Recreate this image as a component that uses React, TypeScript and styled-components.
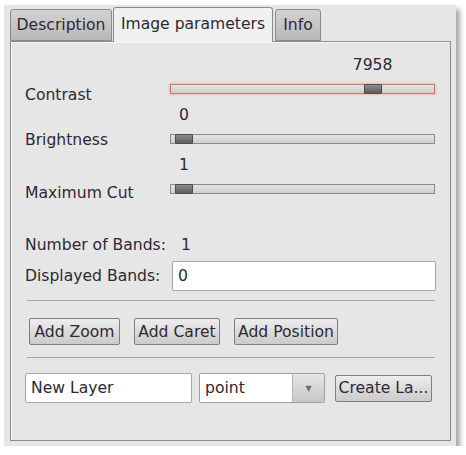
import styled, { createGlobalStyle } from "styled-components";

const GlobalStyle = createGlobalStyle`
  html, body {
    margin: 0;
    padding: 0;
    background: #ffffff;
  }
  body {
    font-family: "DejaVu Sans", Verdana, sans-serif;
    font-size: 15.6px;
    color: #2e2834;
  }
`;

const Frame = styled.div`
  margin: 5px 0 0 4px;
  width: 452px;
  height: 441px;
  box-sizing: border-box;
  background: #e6e6e6;
  box-shadow: 4px 4px 5px rgba(0, 0, 0, 0.35);
  padding: 2px 5px 5px 6px;
  display: flex;
  flex-direction: column;
`;

const TabBar = styled.div`
  display: flex;
  align-items: flex-end;
  height: 34px;
  position: relative;
  z-index: 1;
`;

const Tab = styled.div<{ $active?: boolean; $width: number }>`
  width: ${(p) => p.$width}px;
  height: ${(p) => (p.$active ? 35 : 32)}px;
  margin-bottom: ${(p) => (p.$active ? -1 : 0)}px;
  margin-right: ${(p) => (p.$active ? 2 : 1)}px;
  padding-bottom: ${(p) => (p.$active ? 3 : 0)}px;
  box-sizing: border-box;
  border: 1px solid #8a8a8a;
  border-bottom: ${(p) => (p.$active ? "none" : "1px solid #8a8a8a")};
  border-radius: 3px 3px 0 0;
  background: ${(p) =>
    p.$active ? "#f0f0f0" : "linear-gradient(#d3d3d3, #b8b8b8)"};
  display: flex;
  align-items: center;
  justify-content: center;
  white-space: nowrap;
`;

const Panel = styled.div`
  flex: 1;
  border: 1px solid #8c8c8c;
  background: #e6e6e6;
  box-shadow: inset 1px 1px 0 #f6f6f6;
  padding: 8px 14px 0 14px;
  display: flex;
  flex-direction: column;
`;

const SliderRow = styled.div`
  display: grid;
  grid-template-columns: 145px 1fr;
  height: 50px;
`;

const RowLabel = styled.div<{ $center: number }>`
  padding-top: ${(p) => p.$center - 9}px;
  line-height: 18px;
  white-space: nowrap;
`;

const SliderCell = styled.div`
  position: relative;
  padding-top: 34px;
`;

const ValueLabel = styled.div`
  position: absolute;
  top: 6px;
  line-height: 18px;
  transform: translateX(-50%);
`;

const Track = styled.div<{ $focused?: boolean }>`
  position: relative;
  width: 265px;
  height: 10px;
  box-sizing: border-box;
  border: 1px solid ${(p) => (p.$focused ? "#c57a66" : "#8a8a8a")};
  background: linear-gradient(#e4e4e4, #cfcfcf);
  box-shadow: ${(p) =>
    p.$focused ? "0 0 2px 1px rgba(245, 165, 135, 0.6)" : "none"};
`;

const Thumb = styled.div`
  position: absolute;
  top: -1px;
  width: 18px;
  height: 10px;
  box-sizing: border-box;
  border: 1px solid #4c4c4c;
  border-radius: 1px;
  background: linear-gradient(#8e8e8e, #5c5c5c);
`;

const InfoRow = styled.div<{ $top: number; $col: number }>`
  display: grid;
  grid-template-columns: ${(p) => p.$col}px 1fr;
  align-items: center;
  margin-top: ${(p) => p.$top}px;
  line-height: 20px;
  white-space: nowrap;
`;

const InfoValue = styled.div`
  padding-left: 11px;
`;

const TextField = styled.input<{ $width?: number }>`
  height: 30px;
  width: ${(p) => (p.$width ? `${p.$width}px` : "100%")};
  box-sizing: border-box;
  border: 1px solid #a6a6a6;
  border-radius: 2px;
  background: #ffffff;
  padding: 0 5px;
  font: inherit;
  color: #2e2834;
  outline: none;
`;

const Separator = styled.div<{ $top: number }>`
  margin: ${(p) => p.$top}px 1px 0 2px;
  height: 1px;
  background: #a4a4a4;
`;

const ButtonRow = styled.div<{ $top: number }>`
  display: flex;
  align-items: center;
  gap: 14px;
  margin-top: ${(p) => p.$top}px;
  padding-left: 4px;
`;

const Button = styled.button<{ $width: number }>`
  width: ${(p) => p.$width}px;
  height: 27px;
  padding: 0;
  box-sizing: border-box;
  border: 1px solid #7e7e7e;
  border-radius: 2px;
  background: linear-gradient(#ededed, #cbcbcb);
  font: inherit;
  color: #2e2834;
  white-space: nowrap;
  overflow: hidden;
`;

const BottomRow = styled.div<{ $top: number }>`
  display: flex;
  align-items: center;
  margin-top: ${(p) => p.$top}px;
  gap: 7px;
`;

const Combo = styled.div`
  display: flex;
  width: 126px;
  height: 30px;
  box-sizing: border-box;
  border: 1px solid #a0a0a0;
  border-radius: 2px;
  margin-right: 3px;
`;

const ComboText = styled.div`
  flex: 1;
  background: #ffffff;
  padding-left: 5px;
  line-height: 28px;
`;

const ComboArrow = styled.div`
  width: 31px;
  border-left: 1px solid #b4b4b4;
  background: linear-gradient(#e6e6e6, #c6c6c6);
  display: flex;
  align-items: center;
  justify-content: center;
  color: #707070;
  font-size: 8px;
`;

type SliderProps = {
  label: string;
  value: number;
  max: number;
  labelCenter: number;
  focused?: boolean;
};

function Slider({ label, value, max, labelCenter, focused }: SliderProps) {
  const offset = (value / max) * 237;
  return (
    <SliderRow>
      <RowLabel $center={labelCenter}>{label}</RowLabel>
      <SliderCell>
        <ValueLabel style={{ left: 14 + offset }}>{value}</ValueLabel>
        <Track $focused={focused}>
          <Thumb style={{ left: 4 + offset }} />
        </Track>
      </SliderCell>
    </SliderRow>
  );
}

export default function App() {
  return (
    <>
      <GlobalStyle />
      <Frame>
        <TabBar>
          <Tab $width={102}>Description</Tab>
          <Tab $width={160} $active>
            Image parameters
          </Tab>
          <Tab $width={46}>Info</Tab>
        </TabBar>
        <Panel>
          <Slider label="Contrast" value={7958} max={10000} labelCenter={45} focused />
          <Slider label="Brightness" value={0} max={10000} labelCenter={40} />
          <Slider label="Maximum Cut" value={1} max={10000} labelCenter={43} />
          <InfoRow $top={35} $col={145}>
            <div>Number of Bands:</div>
            <InfoValue>1</InfoValue>
          </InfoRow>
          <InfoRow $top={6} $col={147}>
            <div>Displayed Bands:</div>
            <TextField defaultValue="0" />
          </InfoRow>
          <Separator $top={9} />
          <ButtonRow $top={17}>
            <Button $width={91}>Add Zoom</Button>
            <Button $width={86}>Add Caret</Button>
            <Button $width={104}>Add Position</Button>
          </ButtonRow>
          <Separator $top={12} />
          <BottomRow $top={15}>
            <TextField $width={167} defaultValue="New Layer" />
            <Combo>
              <ComboText>point</ComboText>
              <ComboArrow>▼</ComboArrow>
            </Combo>
            <Button $width={97}>Create La...</Button>
          </BottomRow>
        </Panel>
      </Frame>
    </>
  );
}
